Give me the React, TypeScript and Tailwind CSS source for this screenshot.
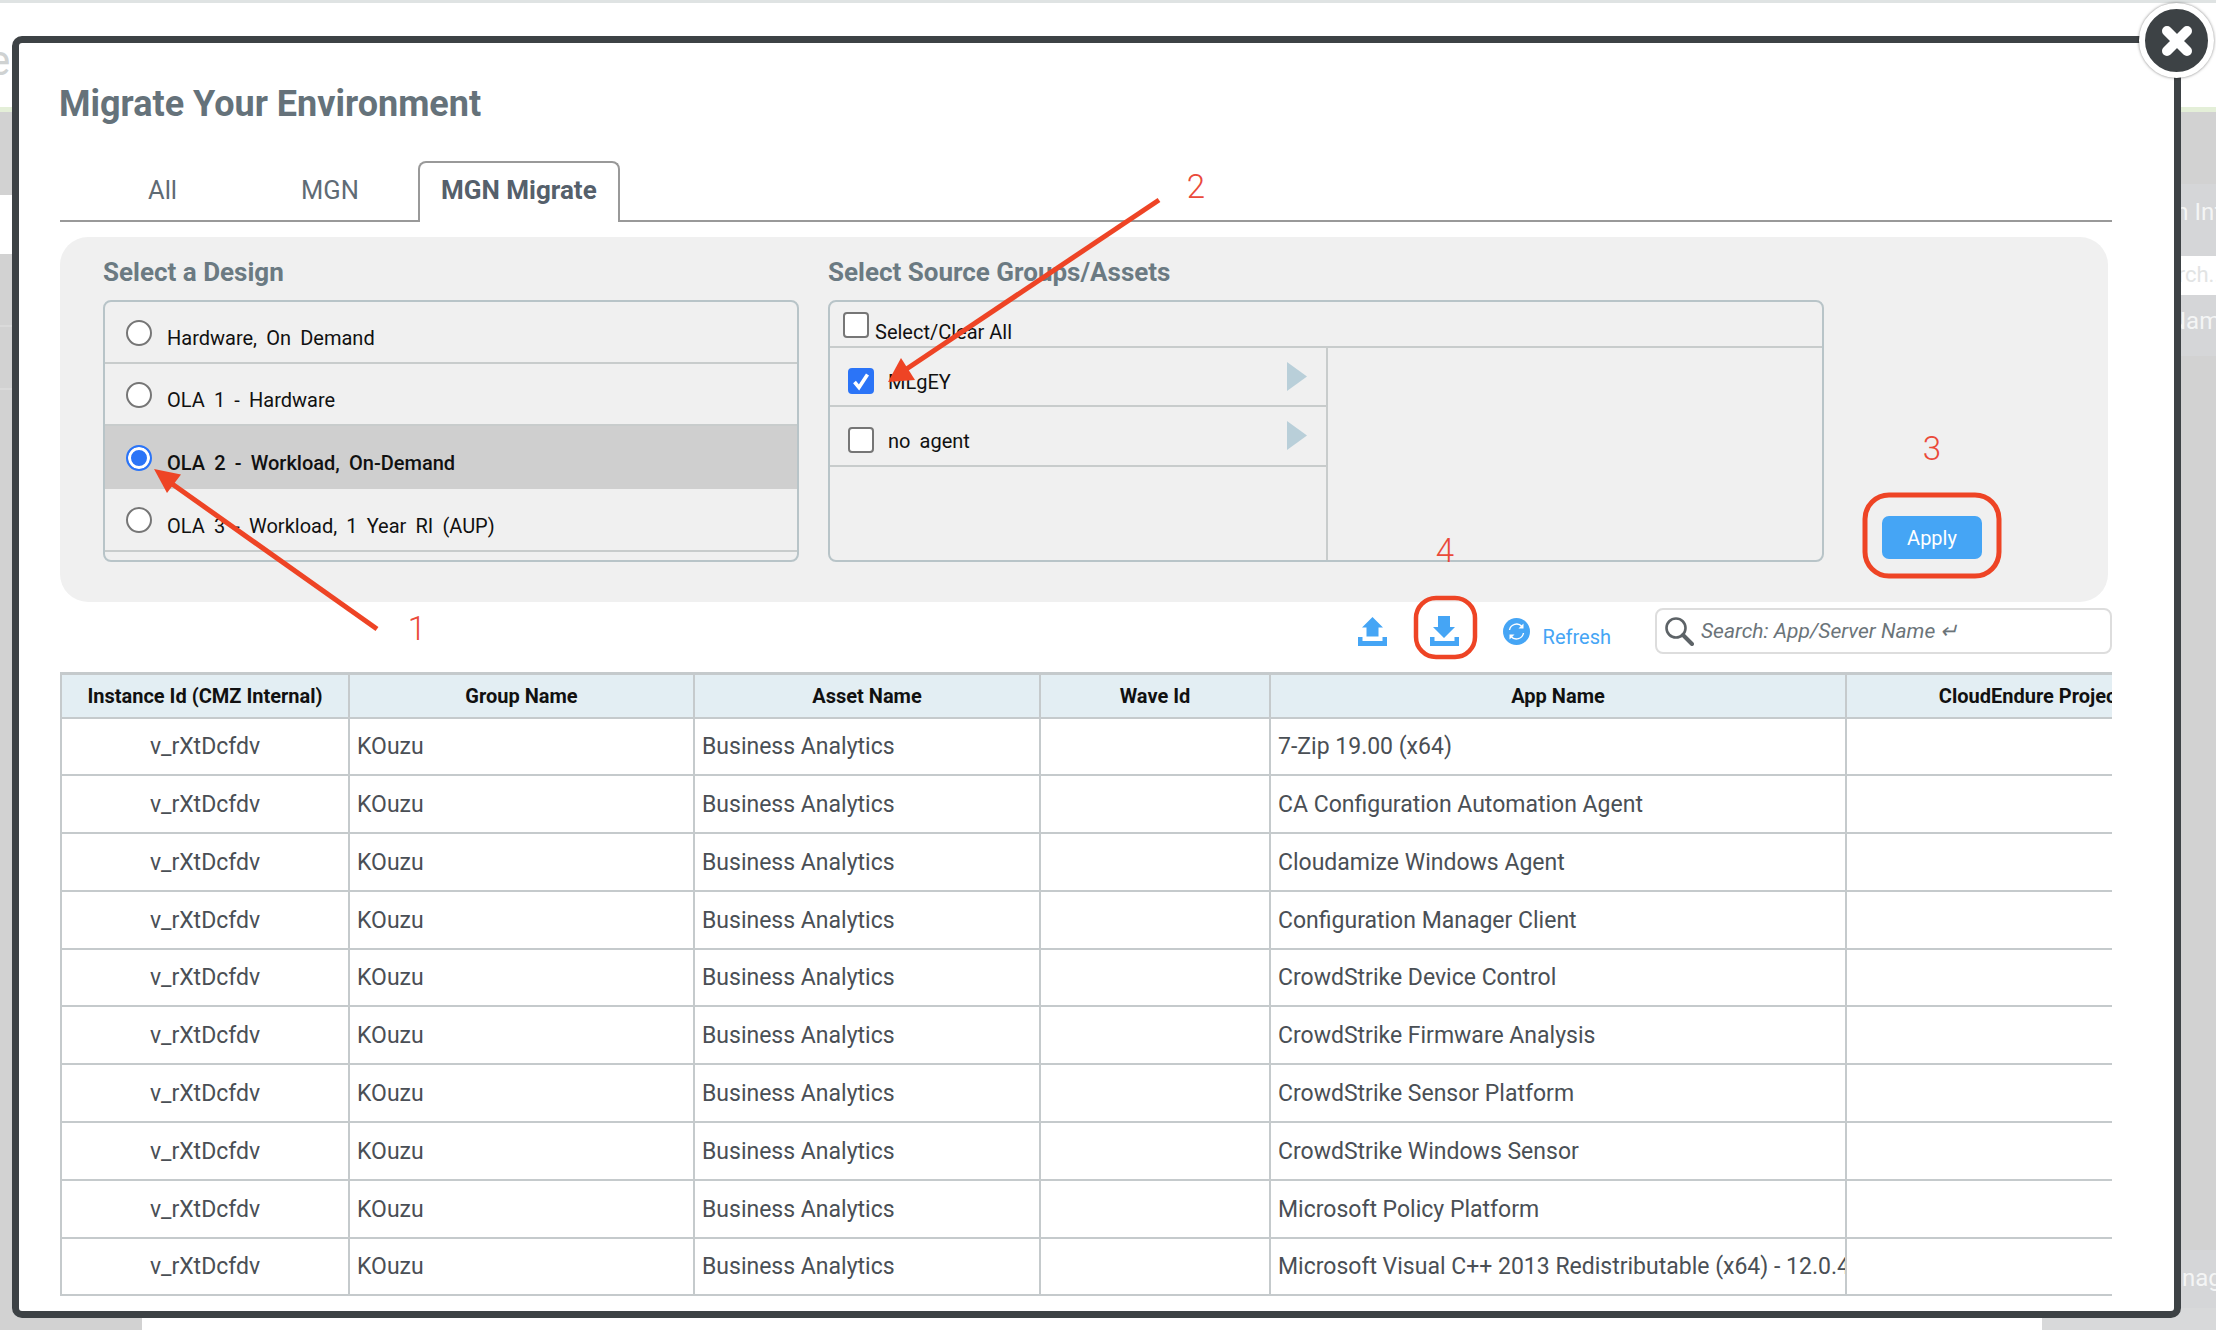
import React from "react";

const rows = [
  "7-Zip 19.00 (x64)",
  "CA Configuration Automation Agent",
  "Cloudamize Windows Agent",
  "Configuration Manager Client",
  "CrowdStrike Device Control",
  "CrowdStrike Firmware Analysis",
  "CrowdStrike Sensor Platform",
  "CrowdStrike Windows Sensor",
  "Microsoft Policy Platform",
  "Microsoft Visual C++ 2013 Redistributable (x64) - 12.0.40660",
];

const designs = [
  { label: "Hardware, On Demand", row: "h-[62px] border-b-2 border-[#c8cccc]", radio: "mt-[18px]", text: "mt-[22px]" },
  { label: "OLA 1 - Hardware", row: "h-[62px] border-b-2 border-[#c8cccc]", radio: "mt-[18px]", text: "mt-[22px]" },
  { label: "OLA 2 - Workload, On-Demand", row: "h-[63px] bg-[#cfcfcf]", radio: "mt-[19px]", text: "mt-[23px]", active: true },
  { label: "OLA 3 - Workload, 1 Year RI (AUP)", row: "h-[63px] border-b-2 border-[#c8cccc]", radio: "mt-[18px]", text: "mt-[23px]" },
];

function Triangle() {
  return (
    <svg width="20" height="29" viewBox="0 0 20 29" className="ml-auto mr-[19px] mt-[14px] shrink-0">
      <path d="M0 0 L20 14.5 L0 29 Z" fill="#b9cfd9" />
    </svg>
  );
}

function Check({ on, cls }: { on?: boolean; cls: string }) {
  return (
    <span className={`relative w-[26px] h-[26px] shrink-0 ${cls}`}>
      <input
        type="checkbox"
        readOnly
        checked={!!on}
        className={`block appearance-none w-[26px] h-[26px] m-0 rounded-[4px] border-2 ${on ? "bg-[#2b74f7] border-[#2b74f7]" : "bg-white border-[#767676]"}`}
      />
      {on && (
        <svg width="26" height="26" viewBox="0 0 26 26" className="absolute left-0 top-0">
          <path d="M6.5 14 L11 19.5 L19.5 6.5" fill="none" stroke="#fff" strokeWidth="3.6" />
        </svg>
      )}
    </span>
  );
}

function UploadIcon() {
  return (
    <svg width="29" height="29" viewBox="0 0 29 29" className="mt-[15px] shrink-0">
      <path d="M14.5 0 L25 10.5 H20.5 V19.5 H8.5 V10.5 H4 Z" fill="#45a5f5" />
      <path d="M0 20 H4.5 V24 H24.5 V20 H29 V29 H0 Z" fill="#45a5f5" />
    </svg>
  );
}

function DownloadIcon() {
  return (
    <svg width="29" height="30" viewBox="0 0 29 30" className="ml-[43px] mt-[14px] shrink-0">
      <path d="M8 0 H20 V11 H25 L14 22 L3 11 H8 Z" fill="#45a5f5" />
      <path d="M0 21 H4.5 V25 H24.5 V21 H29 V30 H0 Z" fill="#45a5f5" />
    </svg>
  );
}

function RefreshIcon() {
  return (
    <svg width="27" height="27" viewBox="0 0 27 27" className="ml-[44px] mt-[16px] shrink-0">
      <circle cx="13.5" cy="13.5" r="13.5" fill="#45a5f5" />
      <path d="M6.5 12 A7.2 7.2 0 0 1 19 8.5" fill="none" stroke="#fff" strokeWidth="1.4" />
      <path d="M20.5 15 A7.2 7.2 0 0 1 8 18.5" fill="none" stroke="#fff" strokeWidth="1.4" />
      <path d="M20.5 5.5 V10.5 H15.5 Z" fill="#fff" />
      <path d="M6.5 21.5 V16.5 H11.5 Z" fill="#fff" />
    </svg>
  );
}

function Annotations() {
  const c = "#ee4425";
  const t = "#ea4a3a";
  return (
    <svg width="2216" height="1330" viewBox="0 0 2216 1330" className="absolute left-0 top-0 pointer-events-none">
      <line x1="377" y1="629" x2="168" y2="481" stroke={c} strokeWidth="5" />
      <path d="M154 469 L181 474.5 L167 493 Z" fill={c} />
      <line x1="1159" y1="200" x2="905" y2="370" stroke={c} strokeWidth="5" />
      <path d="M888 382 L901 358 L915 380 Z" fill={c} />
      <rect x="1865" y="495" width="134" height="81" rx="24" fill="none" stroke={c} strokeWidth="5" />
      <rect x="1416" y="598" width="59" height="59" rx="20" fill="none" stroke={c} strokeWidth="4.5" />
      <g fontFamily="Roboto, sans-serif" fontWeight="300" fontSize="33" fill={t} textAnchor="middle">
        <text x="417" y="640">1</text>
        <text x="1196" y="198">2</text>
        <text x="1932" y="460">3</text>
        <text x="1445" y="562">4</text>
      </g>
    </svg>
  );
}

export default function App() {
  return (
    <div className="relative w-[2216px] h-[1330px] overflow-hidden bg-white font-['Roboto',sans-serif]">
      {/* page behind the dialog */}
      <div className="flex flex-col h-full">
        <div className="h-[3px] bg-[#dfe3e3]" />
        <div className="h-[104px] bg-white overflow-hidden">
          <div className="mt-[33px] -ml-[12px] text-[42px] leading-[50px] text-[#cfd2d2]">e</div>
        </div>
        <div className="h-[5px] bg-[#e4efd8]" />
        <div className="flex flex-1 min-h-0">
          <div className="w-[142px] flex flex-col">
            <div className="h-[83px] bg-[#d2d2d2]" />
            <div className="h-[59px] bg-white" />
            <div className="h-[73px] bg-[#d2d2d2] border-b-2 border-[#dadada]" />
            <div className="h-[63px] bg-[#d2d2d2] border-b-2 border-[#dadada]" />
            <div className="flex-1 bg-[#d2d2d2]" />
          </div>
          <div className="flex-1 bg-white" />
          <div className="w-[174px] flex flex-col text-[24px] whitespace-nowrap">
            <div className="h-[72px] bg-[#d2d2d2]" />
            <div className="h-[72px] bg-[#d5d6d8] pl-[45px] pt-[14px] text-[#f4f5f5] leading-[28px]">Migration Info</div>
            <div className="h-[39px] bg-white pl-[99px] pt-[5px] text-[22px] text-[#e2e4e4] leading-[28px]">Search...</div>
            <div className="h-[61px] bg-[#d5d6d8] pl-[127px] pt-[12px] text-[#f4f5f5] leading-[28px]">Name</div>
            <div className="h-[894px] bg-[#d2d2d2]" />
            <div className="h-[58px] bg-[#d5d6d8] pl-[106px] pt-[14px] text-[#f4f5f5] leading-[28px]">Manage</div>
            <div className="flex-1 bg-[#d8d9da]" />
          </div>
        </div>
      </div>

      {/* dialog */}
      <div className="absolute left-[12px] top-[36px] w-[2169px] h-[1282px] bg-white border-[7px] border-[#3d4245] rounded-[10px] pl-[41px] pt-[39px] overflow-hidden">
        <div className="w-[2052px]">
          <h1 className="-ml-[1px] text-[36px] leading-[44px] font-bold text-[#65727a]">Migrate Your Environment</h1>

          <div className="mt-[35px] h-[61px] flex border-b-2 border-[#999999] text-[25.5px] text-[#5f6b75]">
            <div className="pl-[88px] leading-[58px]">All</div>
            <div className="pl-[124px] leading-[58px]">MGN</div>
            <div className="ml-[59px] w-[202px] h-[61px] text-center bg-white border-2 border-b-0 border-[#999999] rounded-t-[8px] font-bold text-[26px] text-[#55606b] leading-[54px]">
              MGN Migrate
            </div>
          </div>

          <div className="mt-[15px] w-[2048px] h-[365px] bg-[#f0f0f0] rounded-[28px] pl-[43px] pt-[21px] flex">
            <div className="w-[696px] shrink-0">
              <div className="text-[26px] leading-[28px] font-bold text-[#6b7a82]">Select a Design</div>
              <div className="mt-[14px] h-[262px] border-2 border-[#b8c4c8] rounded-[8px] overflow-hidden">
                {designs.map((d) => (
                  <div key={d.label} className={`${d.row} flex items-start pl-[21px]`}>
                    <input
                      type="radio"
                      name="design"
                      readOnly
                      checked={!!d.active}
                      className={`appearance-none w-[26px] h-[26px] m-0 ${d.radio} shrink-0 rounded-full border-2 ${d.active ? "border-[#2b74f7] bg-[#2b74f7] shadow-[inset_0_0_0_3px_#ffffff]" : "border-[#767676] bg-white"}`}
                    />
                    <span className={`ml-[15px] ${d.text} text-[20px] leading-[28px] [word-spacing:4.2px] whitespace-nowrap text-[#111] ${d.active ? "font-medium" : ""}`}>{d.label}</span>
                  </div>
                ))}
              </div>
            </div>

            <div className="ml-[29px] w-[996px] shrink-0">
              <div className="text-[26px] leading-[28px] font-bold text-[#6b7a82]">Select Source Groups/Assets</div>
              <div className="mt-[14px] h-[262px] border-2 border-[#b8c4c8] rounded-[8px] overflow-hidden flex flex-col">
                <div className="h-[46px] shrink-0 flex items-start pl-[13px] border-b-2 border-[#c8cccc]">
                  <Check cls="mt-[10px]" />
                  <span className="ml-[6px] mt-[16px] text-[20px] leading-[28px] text-[#111]">Select/Clear All</span>
                </div>
                <div className="flex-1 flex">
                  <div className="w-[498px] border-r-2 border-[#c8cccc]">
                    <div className="h-[59px] flex items-start pl-[18px] border-b-2 border-[#c8cccc]">
                      <Check on cls="mt-[20px]" />
                      <span className="ml-[14px] mt-[20px] text-[20px] leading-[28px] text-[#111]">MLgEY</span>
                      <Triangle />
                    </div>
                    <div className="h-[60px] flex items-start pl-[18px] border-b-2 border-[#c8cccc]">
                      <Check cls="mt-[20px]" />
                      <span className="ml-[14px] mt-[20px] text-[20px] leading-[28px] [word-spacing:4.2px] whitespace-nowrap text-[#111]">no agent</span>
                      <Triangle />
                    </div>
                  </div>
                </div>
              </div>
            </div>

            <button className="ml-[58px] mt-[258px] w-[100px] h-[43px] bg-[#45a5f5] rounded-[7px] text-white text-[20px]">Apply</button>
          </div>

          <div className="h-[70px] flex items-start">
            <div className="ml-auto flex items-start">
              <UploadIcon />
              <DownloadIcon />
              <RefreshIcon />
              <span className="ml-[13px] mt-[21px] text-[20px] leading-[28px] text-[#45a5f5]">Refresh</span>
            </div>
            <div className="ml-[44px] mt-[6px] w-[457px] h-[46px] flex items-center bg-white border-2 border-[#dddddd] rounded-[8px]">
              <svg width="30" height="30" viewBox="0 0 30 30" className="ml-[7px] shrink-0">
                <circle cx="12" cy="12" r="9.5" fill="none" stroke="#5d6367" strokeWidth="2.6" />
                <line x1="19" y1="19" x2="28" y2="28" stroke="#5d6367" strokeWidth="4" strokeLinecap="round" />
              </svg>
              <input
                readOnly
                placeholder="Search: App/Server Name ↵"
                className="ml-[7px] pt-[2px] flex-1 min-w-0 outline-none bg-transparent italic text-[21px] placeholder:text-[#6b7479]"
              />
            </div>
          </div>

          <div className="w-[2052px] overflow-hidden">
            <table className="table-fixed border-collapse w-[2213px] text-[23px] text-[#4a4f55]">
              <colgroup>
                <col className="w-[288px]" />
                <col className="w-[345px]" />
                <col className="w-[346px]" />
                <col className="w-[230px]" />
                <col className="w-[576px]" />
                <col className="w-[428px]" />
              </colgroup>
              <thead>
                <tr className="h-[44px] bg-[#e3eef3] text-[20px] text-[#111]">
                  {["Instance Id (CMZ Internal)", "Group Name", "Asset Name", "Wave Id", "App Name", "CloudEndure Project Name"].map((h) => (
                    <th key={h} className="border-2 border-t-[3px] border-[#c5cacc] font-bold whitespace-nowrap">{h}</th>
                  ))}
                </tr>
              </thead>
              <tbody>
                {rows.map((app) => (
                  <tr key={app} className="h-[57.8px]">
                    <td className="border-2 border-[#c5cacc] pt-[2px] text-center">v_rXtDcfdv</td>
                    <td className="border-2 border-[#c5cacc] pt-[2px] px-[7px]">KOuzu</td>
                    <td className="border-2 border-[#c5cacc] pt-[2px] px-[7px]">Business Analytics</td>
                    <td className="border-2 border-[#c5cacc]" />
                    <td className="border-2 border-[#c5cacc] pt-[2px] pl-[7px] whitespace-nowrap overflow-hidden">{app}</td>
                    <td className="border-2 border-[#c5cacc]" />
                  </tr>
                ))}
              </tbody>
            </table>
          </div>
        </div>
      </div>

      {/* close button */}
      <button className="absolute left-[2139px] top-[3px] w-[75px] h-[75px] rounded-full bg-[#3d4245] border-[6px] border-white shadow-[0_0_3px_rgba(0,0,0,0.5)] flex items-center justify-center">
        <svg width="32" height="32" viewBox="0 0 32 32">
          <path d="M6 6 L26 26 M26 6 L6 26" stroke="#fff" strokeWidth="10" strokeLinecap="round" />
        </svg>
      </button>

      <Annotations />
    </div>
  );
}
